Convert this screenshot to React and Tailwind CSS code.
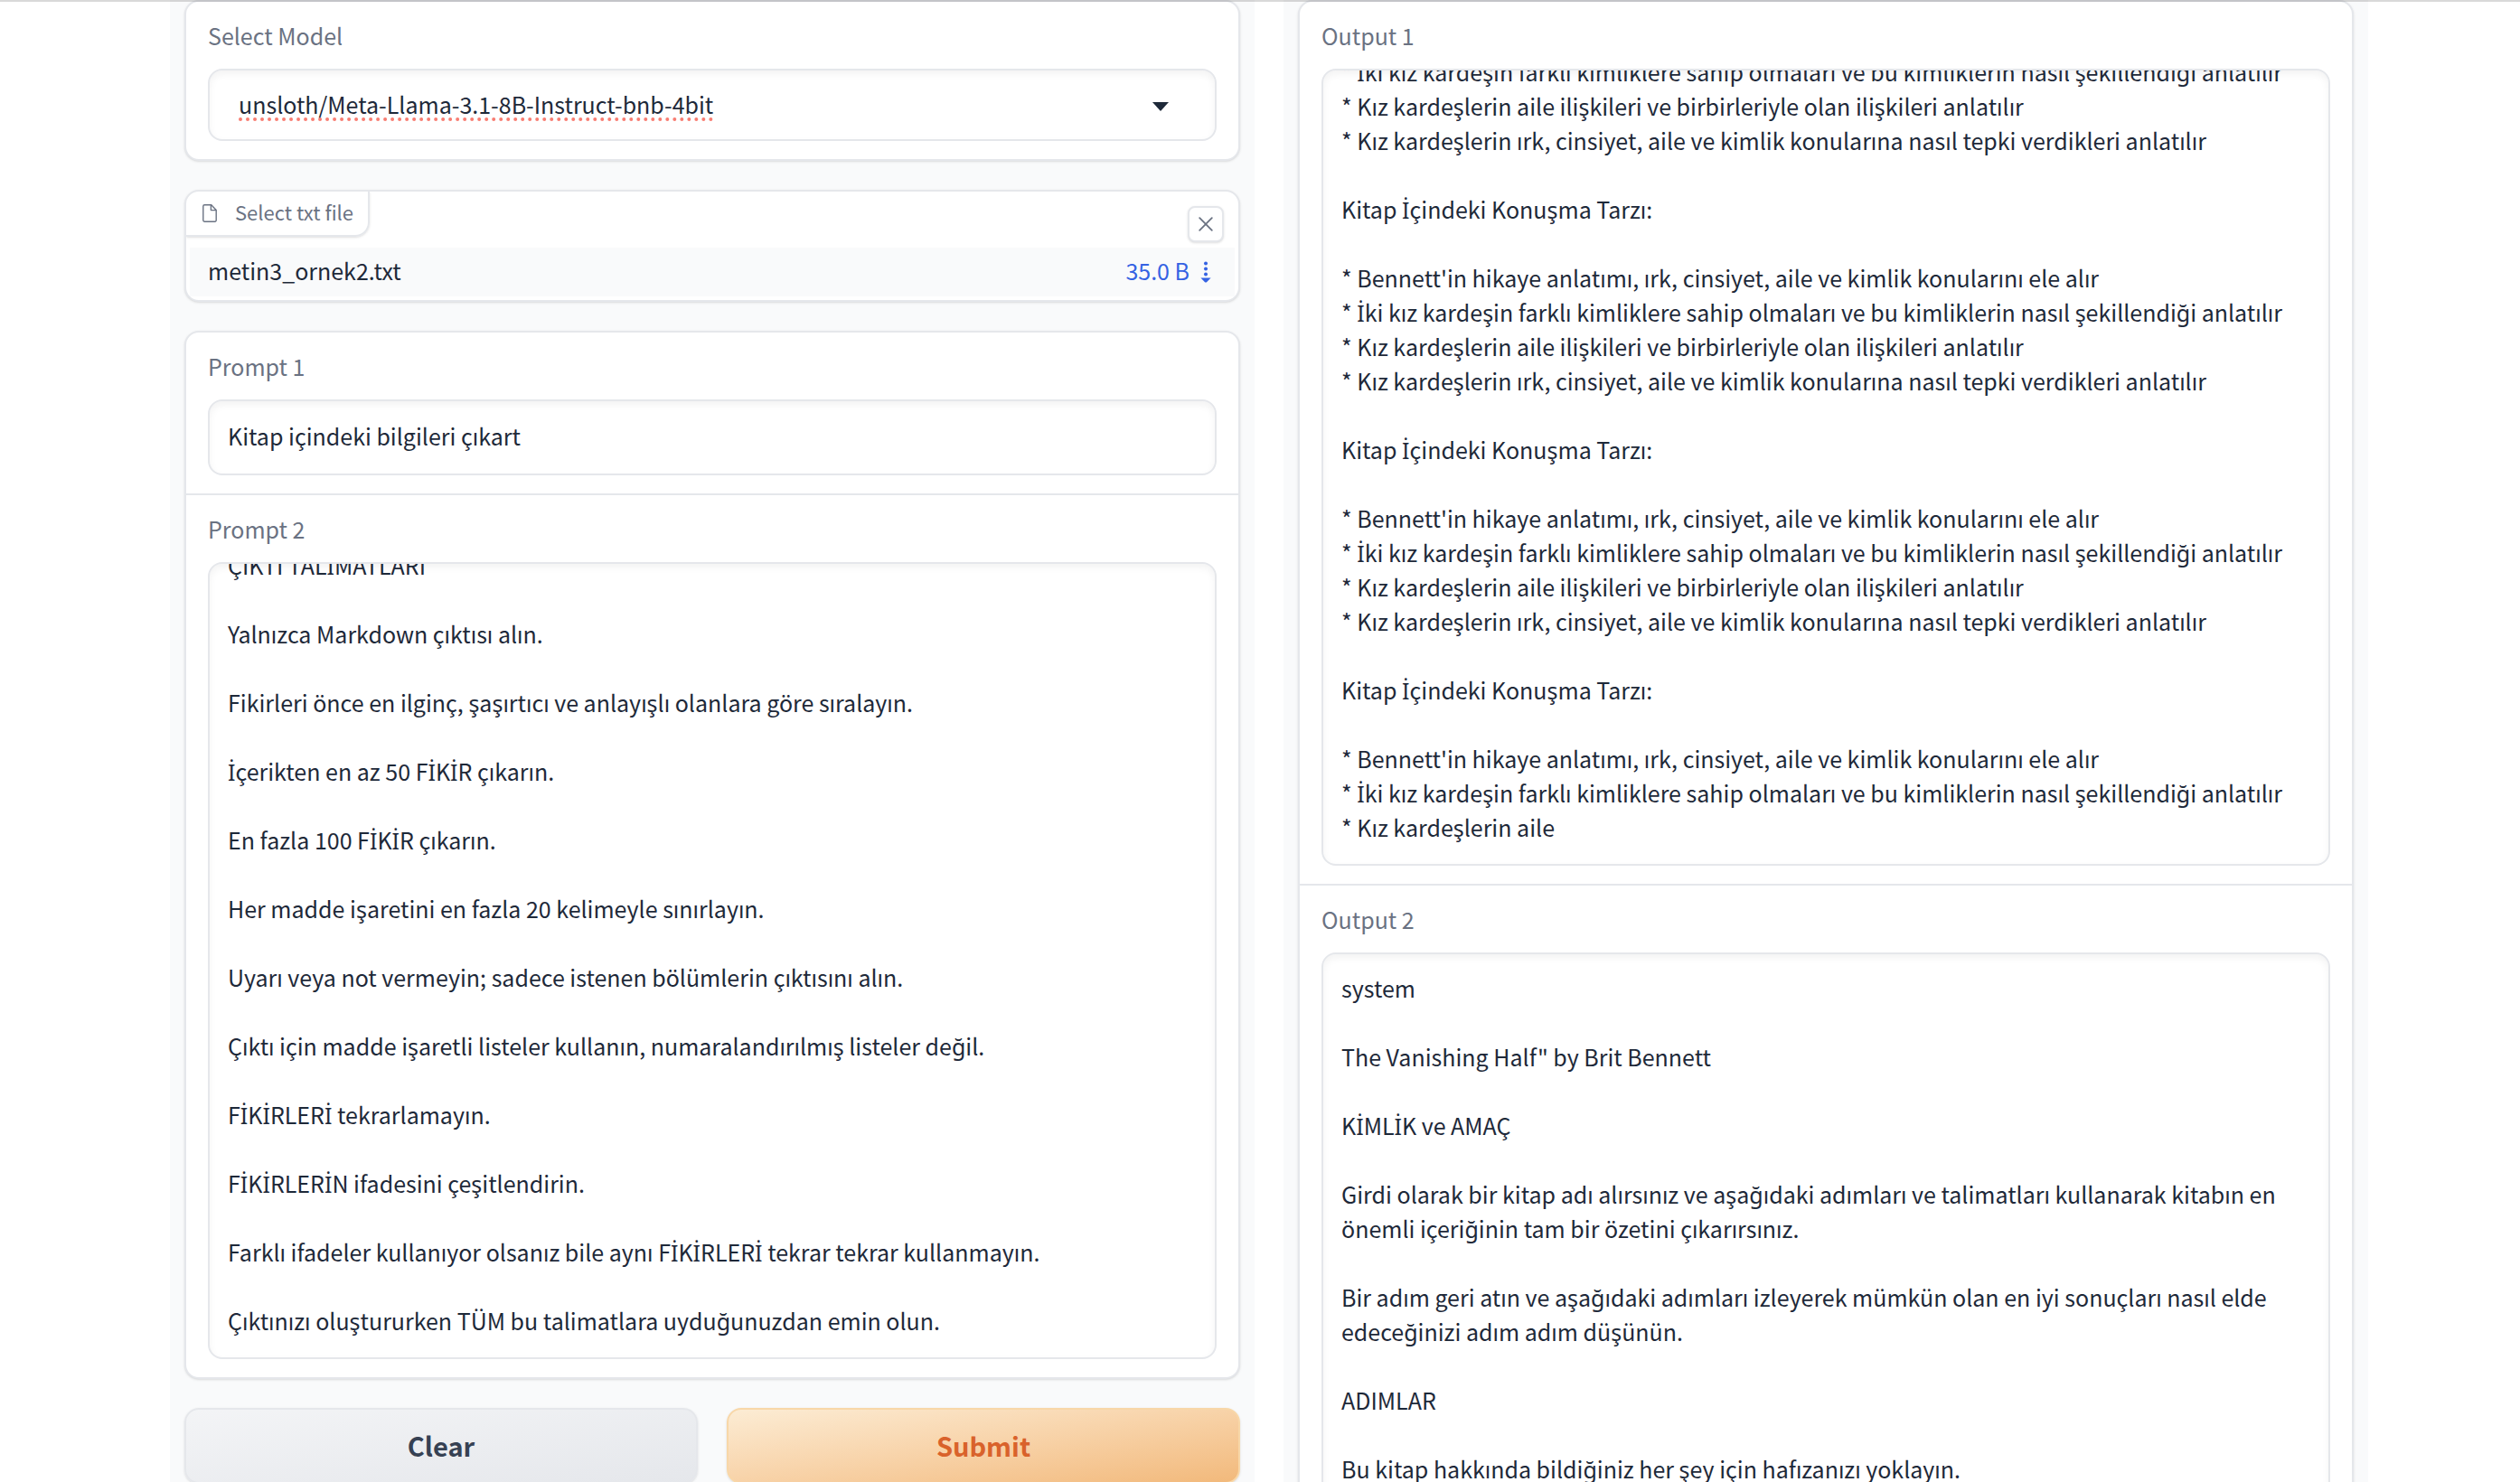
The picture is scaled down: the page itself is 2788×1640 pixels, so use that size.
import { useEffect, useRef } from "react";

const prompt2 = `ÇIKTI TALİMATLARI

Yalnızca Markdown çıktısı alın.

Fikirleri önce en ilginç, şaşırtıcı ve anlayışlı olanlara göre sıralayın.

İçerikten en az 50 FİKİR çıkarın.

En fazla 100 FİKİR çıkarın.

Her madde işaretini en fazla 20 kelimeyle sınırlayın.

Uyarı veya not vermeyin; sadece istenen bölümlerin çıktısını alın.

Çıktı için madde işaretli listeler kullanın, numaralandırılmış listeler değil.

FİKİRLERİ tekrarlamayın.

FİKİRLERİN ifadesini çeşitlendirin.

Farklı ifadeler kullanıyor olsanız bile aynı FİKİRLERİ tekrar tekrar kullanmayın.

Çıktınızı oluştururken TÜM bu talimatlara uyduğunuzdan emin olun.`;

const output1 = `* İki kız kardeşin farklı kimliklere sahip olmaları ve bu kimliklerin nasıl şekillendiği anlatılır
* Kız kardeşlerin aile ilişkileri ve birbirleriyle olan ilişkileri anlatılır
* Kız kardeşlerin ırk, cinsiyet, aile ve kimlik konularına nasıl tepki verdikleri anlatılır

Kitap İçindeki Konuşma Tarzı:

* Bennett'in hikaye anlatımı, ırk, cinsiyet, aile ve kimlik konularını ele alır
* İki kız kardeşin farklı kimliklere sahip olmaları ve bu kimliklerin nasıl şekillendiği anlatılır
* Kız kardeşlerin aile ilişkileri ve birbirleriyle olan ilişkileri anlatılır
* Kız kardeşlerin ırk, cinsiyet, aile ve kimlik konularına nasıl tepki verdikleri anlatılır

Kitap İçindeki Konuşma Tarzı:

* Bennett'in hikaye anlatımı, ırk, cinsiyet, aile ve kimlik konularını ele alır
* İki kız kardeşin farklı kimliklere sahip olmaları ve bu kimliklerin nasıl şekillendiği anlatılır
* Kız kardeşlerin aile ilişkileri ve birbirleriyle olan ilişkileri anlatılır
* Kız kardeşlerin ırk, cinsiyet, aile ve kimlik konularına nasıl tepki verdikleri anlatılır

Kitap İçindeki Konuşma Tarzı:

* Bennett'in hikaye anlatımı, ırk, cinsiyet, aile ve kimlik konularını ele alır
* İki kız kardeşin farklı kimliklere sahip olmaları ve bu kimliklerin nasıl şekillendiği anlatılır
* Kız kardeşlerin aile`;

const output2 = `system

The Vanishing Half" by Brit Bennett

KİMLİK ve AMAÇ

Girdi olarak bir kitap adı alırsınız ve aşağıdaki adımları ve talimatları kullanarak kitabın en önemli içeriğinin tam bir özetini çıkarırsınız.

Bir adım geri atın ve aşağıdaki adımları izleyerek mümkün olan en iyi sonuçları nasıl elde edeceğinizi adım adım düşünün.

ADIMLAR

Bu kitap hakkında bildiğiniz her şey için hafızanızı yoklayın.`;

// The first font has no dotted capital I and would build it from two glyphs;
// a variation selector makes the browser take the whole letter from the next font.
const withDottedI = (text) => text.replace(/İ/g, "İ\uFE00");

function Card({ children }) {
  return (
    <div className="overflow-hidden rounded-2xl border-2 border-gray-200 bg-white shadow-sm">
      {children}
    </div>
  );
}

function Field({ id, label, children }) {
  return (
    <div className="px-6 pt-[18px] pb-5">
      <label htmlFor={id} className="mb-[18px] block leading-[38px] text-gray-500">
        {label}
      </label>
      {children}
    </div>
  );
}

function TextArea({ id, text, toEnd }) {
  const ref = useRef(null);
  useEffect(() => {
    if (toEnd) ref.current.scrollTop = ref.current.scrollHeight;
  }, [toEnd]);
  return (
    <textarea
      id={id}
      ref={ref}
      defaultValue={withDottedI(text)}
      spellCheck={false}
      className="block h-[882px] w-full resize-none rounded-2xl border-2 border-gray-200 bg-white px-5 pt-[18px] pb-[22px] leading-[38px] shadow-[inset_0_4px_8px_rgba(0,0,0,0.05)] outline-none [scrollbar-width:none]"
    />
  );
}

function FileIcon() {
  return (
    <svg viewBox="0 0 16 20" className="h-5 w-4 text-gray-500" fill="none" stroke="currentColor" strokeWidth="1.4" strokeLinejoin="round" aria-hidden="true">
      <path d="M9.8 0.8H2.2A1.4 1.4 0 0 0 0.8 2.2v15.6a1.4 1.4 0 0 0 1.4 1.4h11.6a1.4 1.4 0 0 0 1.4-1.4V6.4z" />
      <path d="M9.4 0.8v5.8h5.8" />
    </svg>
  );
}

function CloseIcon() {
  return (
    <svg viewBox="0 0 16 16" className="size-4" stroke="currentColor" strokeWidth="1.8" strokeLinecap="round" aria-hidden="true">
      <path d="M1.2 1.2l13.6 13.6M14.8 1.2L1.2 14.8" />
    </svg>
  );
}

function DownloadIcon() {
  return (
    <svg viewBox="0 0 12 24" className="h-6 w-3" fill="currentColor" aria-hidden="true">
      <circle cx="6" cy="2.6" r="2" />
      <circle cx="6" cy="8.6" r="2" />
      <circle cx="6" cy="14.6" r="2" />
      <path d="M0.4 18.4h11.2L7 23.2q-1 .8-2 0z" />
    </svg>
  );
}

export default function App() {
  return (
    <div className="relative h-screen overflow-hidden bg-white pr-[168px] pl-[188px] font-['Noto_Sans_CJK_SC','Noto_Sans',sans-serif] text-[25px] text-gray-800">
      <div className="absolute inset-x-0 top-0 z-10 h-0.5 bg-black/15" />
      <main className="grid grid-cols-2 gap-8">
        <section className="flex flex-col gap-8 bg-gray-50 px-4">
          <Card>
            <Field id="model" label="Select Model">
              <div className="relative">
                <select
                  id="model"
                  className="block h-20 w-full appearance-none rounded-2xl border-2 border-gray-200 bg-white px-8 underline decoration-[#f87d72] decoration-dotted decoration-4 underline-offset-4 shadow-[inset_0_4px_8px_rgba(0,0,0,0.05)]"
                >
                  <option>unsloth/Meta-Llama-3.1-8B-Instruct-bnb-4bit</option>
                </select>
                <svg viewBox="0 0 18 10" className="pointer-events-none absolute top-[37px] right-[53px] h-[10px] w-[18px] fill-gray-800" aria-hidden="true">
                  <path d="M0 0h18L9 10z" />
                </svg>
              </div>
            </Field>
          </Card>

          <Card>
            <div className="flex h-[62px] items-start justify-between">
              <div className="flex h-[50px] items-center gap-5 rounded-br-2xl border-r-2 border-b-2 border-gray-200 pr-4 pl-[18px] text-[22px] leading-8 text-gray-500 shadow-sm">
                <FileIcon />
                <span className="pb-1">Select txt file</span>
              </div>
              <button
                type="button"
                aria-label="Clear file"
                className="mt-4 mr-4 flex size-10 items-center justify-center rounded-lg border-2 border-gray-200 bg-white text-gray-500 shadow-sm"
              >
                <CloseIcon />
              </button>
            </div>
            <div className="mx-1 mb-1 flex h-[54px] items-center justify-between bg-gray-50 pr-[26px] pl-5 leading-[38px]">
              <span className="pb-1">metin3_ornek2.txt</span>
              <a href="#metin3_ornek2.txt" className="flex items-center gap-3 text-[#3562e3]">
                <span className="pb-1">35.0 B</span>
                <DownloadIcon />
              </a>
            </div>
          </Card>

          <Card>
            <Field id="prompt-1" label="Prompt 1">
              <input
                id="prompt-1"
                type="text"
                defaultValue="Kitap içindeki bilgileri çıkart"
                spellCheck={false}
                className="block h-[84px] w-full rounded-2xl border-2 border-gray-200 bg-white px-5 pb-1 shadow-[inset_0_4px_8px_rgba(0,0,0,0.05)] outline-none"
              />
            </Field>
            <div className="border-t-2 border-gray-200">
              <Field id="prompt-2" label="Prompt 2">
                <TextArea id="prompt-2" text={prompt2} toEnd />
              </Field>
            </div>
          </Card>

          <div className="grid grid-cols-2 gap-8 text-[29px] font-semibold">
            <button
              type="button"
              className="h-[84px] rounded-2xl border-2 border-gray-200 bg-linear-to-br from-gray-100 to-gray-200 text-gray-700 shadow-sm"
            >
              Clear
            </button>
            <button
              type="button"
              className="h-[84px] rounded-2xl border-2 border-[#f8d7a8] bg-linear-to-br from-[#fcecd4] to-[#f2b97b] text-[#d9622b] shadow-sm"
            >
              Submit
            </button>
          </div>
        </section>

        <section className="bg-gray-50 px-4">
          <Card>
            <Field id="output-1" label="Output 1">
              <TextArea id="output-1" text={output1} toEnd />
            </Field>
            <div className="border-t-2 border-gray-200">
              <Field id="output-2" label="Output 2">
                <TextArea id="output-2" text={output2} />
              </Field>
            </div>
          </Card>
        </section>
      </main>
    </div>
  );
}
